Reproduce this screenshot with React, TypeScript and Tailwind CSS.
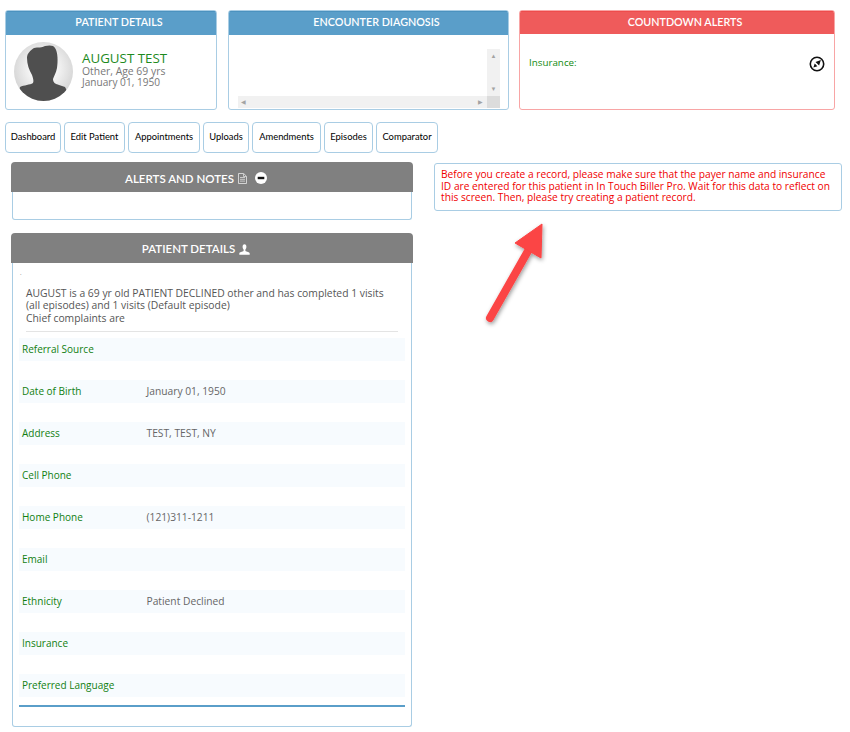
import type { ReactNode } from "react";

const NAV_ITEMS: { label: string; width: string }[] = [
  { label: "Dashboard", width: "w-[56px]" },
  { label: "Edit Patient", width: "w-[61px]" },
  { label: "Appointments", width: "w-[72px]" },
  { label: "Uploads", width: "w-[46px]" },
  { label: "Amendments", width: "w-[69px]" },
  { label: "Episodes", width: "w-[49px]" },
  { label: "Comparator", width: "w-[62px]" },
];

const ROWS: { label: string; value: string }[] = [
  { label: "Referral Source", value: "" },
  { label: "Date of Birth", value: "January 01, 1950" },
  { label: "Address", value: "TEST, TEST, NY" },
  { label: "Cell Phone", value: "" },
  { label: "Home Phone", value: "(121)311-1211" },
  { label: "Email", value: "" },
  { label: "Ethnicity", value: "Patient Declined" },
  { label: "Insurance", value: "" },
  { label: "Preferred Language", value: "" },
];

function Avatar() {
  return (
    <svg width="59" height="59" viewBox="0 0 59 59" className="shrink-0" aria-hidden>
      <defs>
        <radialGradient id="avatarBg" cx="50%" cy="45%" r="55%">
          <stop offset="40%" stopColor="#f6f6f6" />
          <stop offset="100%" stopColor="#d4d4d4" />
        </radialGradient>
        <clipPath id="avatarClip">
          <circle cx="29.5" cy="29.5" r="29.5" />
        </clipPath>
      </defs>
      <circle cx="29.5" cy="29.5" r="29.5" fill="url(#avatarBg)" />
      <path
        clipPath="url(#avatarClip)"
        fill="#4f4f4f"
        d="M13 16 C13 11 17 8 20 6 C24 5 28 6 31 4 C35 3 40 3 41 6 C44 10 44 20 43 26 C42 31 40 34 39 37 C39 41 42 42 45 43 L51 45 C53 49 56 54 56 59 L3 59 L6 45 C10 43 16 43 19 41 C20 39 19 36 18 33 C15 28 13 22 13 16 Z"
      />
    </svg>
  );
}

function CompassIcon() {
  return (
    <svg width="16" height="16" viewBox="0 0 16 16" className="mt-px" aria-hidden>
      <circle cx="8" cy="8" r="6.7" fill="none" stroke="#111" strokeWidth="1.6" />
      <path d="M11.9 4.1 L10.1 9.5 L6.5 5.9 Z M4.4 11.6 L5.7 7.6 L8.4 10.3 Z" fill="#111" />
    </svg>
  );
}

function UserIcon() {
  return (
    <svg width="11" height="11" viewBox="0 0 11 11" aria-hidden>
      <path
        fill="#fff"
        d="M5.5 0.3 C6.8 0.3 7.4 1.4 7.4 2.7 C7.4 4 6.8 4.9 6.4 5.5 L6.4 7 C7.5 7.6 10.7 8 10.7 9.4 L10.7 10.8 L0.3 10.8 L0.3 9.4 C0.3 8 3.5 7.6 4.6 7 L4.6 5.5 C4.2 4.9 3.6 4 3.6 2.7 C3.6 1.4 4.2 0.3 5.5 0.3 Z"
      />
    </svg>
  );
}

function NoteIcon() {
  return (
    <svg width="9" height="11" viewBox="0 0 9 11" aria-hidden>
      <path d="M0.5 0.5 H5.7 L8.5 3.3 V10.5 H0.5 Z" fill="none" stroke="#ddd" strokeWidth="0.9" />
      <path d="M2 4.5 H7 M2 6.3 H7 M2 8.1 H7 M5.5 0.8 V3.5 H8.3" fill="none" stroke="#ddd" strokeWidth="0.8" />
    </svg>
  );
}

function MinusIcon() {
  return (
    <svg width="12" height="12" viewBox="0 0 12 12" className="ml-[4px] -mt-px" aria-hidden>
      <circle cx="6" cy="6" r="6" fill="#fff" />
      <rect x="2.7" y="4.8" width="6.6" height="2.4" fill="#111" />
    </svg>
  );
}

function SummaryCard({ title, className, children }: { title: string; className: string; children?: ReactNode }) {
  return (
    <section className={`h-[100px] overflow-hidden rounded-[3px] border border-[#a9cde4] ${className}`}>
      <h2 className="h-[24px] border-t border-[#4b92bf] bg-[#5a9ec9] pl-[16px] text-center font-['Lato',sans-serif] text-[10.75px] leading-[20px] font-semibold text-white">
        {title}
      </h2>
      {children}
    </section>
  );
}

export default function App() {
  return (
    <div className="relative min-h-[732px] w-[850px] bg-white font-['Open_Sans',sans-serif] text-[#555]">
      <div className="flex gap-[10px] pl-[5px] pt-[10px]">
        <SummaryCard title="PATIENT DETAILS" className="mr-px w-[212px]">
          <div className="flex items-start gap-[9px] pl-[8px] pt-[7px]">
            <Avatar />
            <div className="mt-[9px]">
              <div className="text-[13.35px] leading-[15px] text-[#1d8a1d]">AUGUST TEST</div>
              <div className="text-[10.4px] leading-[11px] text-[#777]">Other, Age 69 yrs</div>
              <div className="text-[10.1px] leading-[11px] text-[#777]">January 01, 1950</div>
            </div>
          </div>
        </SummaryCard>

        <SummaryCard title="ENCOUNTER DIAGNOSIS" className="w-[281px]">
          <div className="relative ml-[9px] mt-[14px] h-[59px] w-[262px]">
            <div className="absolute right-0 top-0 flex h-[47px] w-[13px] flex-col items-center justify-between bg-[#f1f1f1] py-[4px] text-[6px] leading-none text-[#a3a3a3]">
              <span>▲</span>
              <span>▼</span>
            </div>
            <div className="absolute bottom-0 left-0 flex h-[12px] w-full items-center justify-between bg-[#f1f1f1] pl-[3px] pr-[17px] text-[6px] text-[#a3a3a3]">
              <span>◀</span>
              <span>▶</span>
            </div>
            <div className="absolute bottom-0 right-0 h-[12px] w-[13px] bg-[#dcdcdc]" />
          </div>
        </SummaryCard>

        <section className="h-[100px] w-[316px] overflow-hidden rounded-[3px] border border-[#f8a5a5]">
          <h2 className="h-[23px] border-t border-[#ee4c4c] bg-[#ef5b5b] pl-[16px] text-center font-['Lato',sans-serif] text-[10.75px] leading-[19px] font-semibold text-white">
            COUNTDOWN ALERTS
          </h2>
          <div className="flex items-start justify-between pl-[9px] pr-[9px] pt-[21px]">
            <span className="text-[9.8px] leading-[15px] text-[#0f8a0f]">Insurance:</span>
            <CompassIcon />
          </div>
        </section>
      </div>

      <nav className="ml-[5px] mt-[12px] flex gap-[3px]">
        {NAV_ITEMS.map((item) => (
          <a
            key={item.label}
            className={`flex h-[31px] ${item.width} items-center justify-center rounded-[4px] border border-[#a9cde4] font-['Lato',sans-serif] text-[9.4px] font-normal text-black`}
          >
            {item.label}
          </a>
        ))}
      </nav>

      <div className="flex items-start">
        <div className="ml-[11px] mt-[9px] w-[402px]">
          <section>
            <h2 className="flex h-[30px] items-center justify-center gap-[4px] rounded-t-[4px] bg-[#808080] pr-[32px] pt-[3px] font-['Lato',sans-serif] text-[11.5px] font-semibold text-white">
              ALERTS AND NOTES
              <NoteIcon />
              <MinusIcon />
            </h2>
            <div className="mx-px h-[28px] rounded-b-[3px] border border-t-0 border-[#a9cde4]" />
          </section>

          <section className="mt-[13px]">
            <h2 className="flex h-[30px] items-center justify-center gap-[4px] rounded-t-[4px] bg-[#808080] pr-[32px] pt-[2px] font-['Lato',sans-serif] text-[11.5px] font-semibold text-white">
              PATIENT DETAILS
              <UserIcon />
            </h2>
            <div className="mx-px h-[464px] rounded-b-[3px] border border-t-0 border-[#a9cde4] px-[6px]">
              <div className="h-[11px] pl-[1px] text-[6px] leading-[20px]">.</div>
              <div className="px-[7px] pt-[14px] text-[10.35px] leading-[11.5px]">
                <p>AUGUST is a 69 yr old PATIENT DECLINED other and has completed 1 visits (all episodes) and 1 visits (Default episode)</p>
                <p className="mt-[2px]">Chief complaints are</p>
              </div>
              <div className="mx-[7px] mt-[6px] border-t border-[#e4e4e4]" />
              <div className="mt-[6px] flex flex-col gap-[18.5px]">
                {ROWS.map((row) => (
                  <div key={row.label} className="flex h-[23.5px] items-center bg-[#f7fbfe] pl-[3px]">
                    <span className="w-[124.5px] text-[10px] font-medium text-[#118011]">{row.label}</span>
                    <span className="text-[10.25px] text-[#666]">{row.value}</span>
                  </div>
                ))}
              </div>
              <div className="mt-[8px] border-t-2 border-[#5a9ec9]" />
            </div>
          </section>
        </div>

        <div className="relative ml-[21px] mt-[10px] flex-none">
          <div className="h-[48px] w-[408px] rounded-[3px] border border-[#a9cde4] px-[6px] pt-[5px] text-[10.2px] leading-[11.5px] text-[#f00000]">
            Before you create a record, please make sure that the payer name and insurance ID are entered for this patient in In Touch Biller Pro. Wait for this data to reflect on this screen. Then, please try creating a patient record.
          </div>
          <svg className="absolute left-[40px] top-[50px]" width="80" height="120" viewBox="0 0 80 120" aria-hidden>
            <defs>
              <filter id="arrowShadow" x="-30%" y="-30%" width="160%" height="160%">
                <feDropShadow dx="1" dy="2" stdDeviation="2" floodColor="#000" floodOpacity="0.4" />
              </filter>
            </defs>
            <g filter="url(#arrowShadow)" fill="#fb4444" stroke="#fb4444">
              <path d="M16 105 L54 38" strokeWidth="8" strokeLinecap="round" fill="none" />
              <path d="M41 30 L68 11 L67 45 Z" strokeWidth="1" />
            </g>
          </svg>
        </div>
      </div>
    </div>
  );
}
